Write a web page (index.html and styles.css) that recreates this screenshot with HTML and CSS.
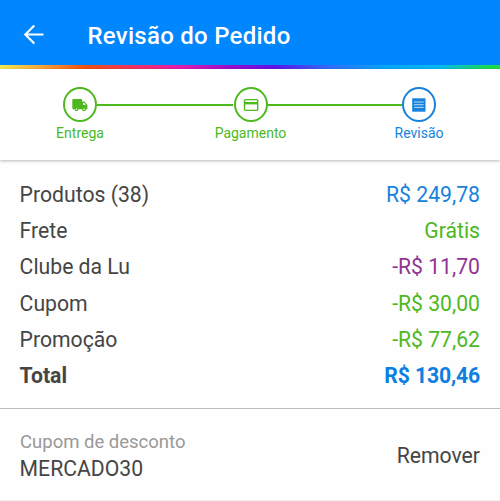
FILE: index.html
```html
<!DOCTYPE html>
<html lang="pt-BR">
<head>
<meta charset="utf-8">
<title>Revisão do Pedido</title>
<link rel="stylesheet" href="styles.css">
</head>
<body>
<header class="topbar">
  <svg class="back" viewBox="0 0 22 20" fill="none" stroke="currentColor" stroke-width="2.1"><path d="M21.500 9.500H3.500M12.300.5 3.300 9.500l9 9"/></svg>
  <h1 class="title">Revisão do Pedido</h1>
</header>
<div class="rainbow"></div>
<nav class="steps">
  <div class="step">
    <span class="circle"><svg class="icon" viewBox="0 0 16 14"><path fill="currentColor" d="M1.2 1H10v2.6h2.400L15.400 7v4.200H14a2 2 0 0 1-4 0H6.400a2 2 0 0 1-4 0H1.200Q.3 11.200.3 10.300V1.900Q.3 1 1.200 1z"/><path fill="#fff" d="M11.200 4.700h1l1.700 2.200h-2.700z"/><circle cx="4.400" cy="11.200" r=".8" fill="#fff"/><circle cx="12" cy="11.200" r=".8" fill="#fff"/></svg></span>
    <span class="label">Entrega</span>
  </div>
  <span class="line"></span>
  <div class="step middle">
    <span class="circle"><svg class="icon" viewBox="0 0 16 14"><rect x="1.500" y="1.600" width="13.200" height="10.800" rx="1" fill="none" stroke="currentColor" stroke-width="1.400"/><path fill="currentColor" d="M1.500 4h13.200v2.400H1.500z"/></svg></span>
    <span class="label">Pagamento</span>
  </div>
  <span class="line"></span>
  <div class="step current">
    <span class="circle"><svg class="icon" viewBox="0 0 16 14"><path fill="currentColor" d="M1.200.3h13.300v13.400h-13.300z"/><path stroke="#b9dcf5" stroke-width="1" d="M3 4h9.700M3 6.700h9.700M3 9.400h9.700"/></svg></span>
    <span class="label">Revisão</span>
  </div>
</nav>
<main>
  <dl class="summary">
    <div class="row"><dt>Produtos (38)</dt><dd class="blue">R$ 249,78</dd></div>
    <div class="row"><dt>Frete</dt><dd class="green">Grátis</dd></div>
    <div class="row"><dt>Clube da Lu</dt><dd class="purple">-R$ 11,70</dd></div>
    <div class="row"><dt>Cupom</dt><dd class="green">-R$ 30,00</dd></div>
    <div class="row"><dt>Promoção</dt><dd class="green">-R$ 77,62</dd></div>
    <div class="row total"><dt>Total</dt><dd class="blue">R$ 130,46</dd></div>
  </dl>
  <section class="coupon">
    <div>
      <div class="caption">Cupom de desconto</div>
      <div class="code">MERCADO30</div>
    </div>
    <span class="remove">Remover</span>
  </section>
</main>
</body>
</html>
```
FILE: styles.css
```css
* { box-sizing: border-box; }
body {
  margin: 0;
  height: 501px;
  overflow: hidden;
  background: #fefefe;
  color: #454545;
  font-family: Roboto, sans-serif;
}
.topbar {
  display: flex;
  align-items: center;
  height: 65px;
  padding: 6px 0 0 22px;
  background: #0086ff;
  color: #fff;
}
.back { width: 22px; height: 20px; margin-bottom: 1px; }
.title {
  margin: 0 0 0 43.5px;
  font-size: 24px;
  line-height: 30px;
  font-weight: 500;
  letter-spacing: .26px;
  white-space: nowrap;
}
.rainbow {
  height: 4px;
  background: linear-gradient(90deg, #f1e950 0, #f6a63c 8%, #f0500f 17%, #ef3263 27%, #e51bae 36%, #9a0fc8 46%, #5b12e6 55%, #3468f5 65%, #09a5fa 77%, #06baf0 88%, #18d85b 97%, #1edb3c 100%);
}
.steps {
  display: flex;
  align-items: flex-start;
  height: 91px;
  padding: 18px 64px 0 63px;
  background: #fff;
  box-shadow: 0 1px 3px rgba(0, 0, 0, .28);
  color: #4db91e;
}
.step {
  display: flex;
  flex-direction: column;
  align-items: center;
  flex: none;
  width: 34px;
}
.middle { margin: 0 -1px 0 1px; }
.circle {
  display: flex;
  align-items: center;
  justify-content: center;
  width: 34px;
  height: 35px;
  border: 2px solid currentColor;
  border-radius: 50%;
}
.icon { width: 16px; height: 14px; }
.label {
  margin-top: 2px;
  font-size: 14px;
  line-height: 18px;
  white-space: nowrap;
}
.current { color: #1682dc; }
.line {
  flex: 1;
  height: 2px;
  margin-top: 17px;
  background: currentColor;
}
.summary {
  margin: 0;
  height: 249px;
  padding: 17.3px 20px 0;
  border-bottom: 1px solid #bcbcbc;
  font-size: 21.2px;
}
.row {
  display: flex;
  justify-content: space-between;
  height: 36.1px;
  line-height: 36px;
}
.row dt { margin-left: -.4px; }
.row dd { margin: 0; }
.blue { color: #1682dc; }
.green { color: #4db91e; }
.purple { color: #923494; }
.total { font-weight: 700; }
.total .blue { color: #0b7fe4; letter-spacing: -.15px; }
.coupon {
  display: flex;
  align-items: center;
  justify-content: space-between;
  height: 92px;
  padding: 2px 20px 0;
  border-bottom: 1px solid #f0f0f0;
  font-size: 21.2px;
}
.caption {
  color: #999;
  font-size: 18.5px;
  line-height: 26px;
}
.code { margin-left: -.4px; line-height: 28px; }
.remove { line-height: 28px; }
```
